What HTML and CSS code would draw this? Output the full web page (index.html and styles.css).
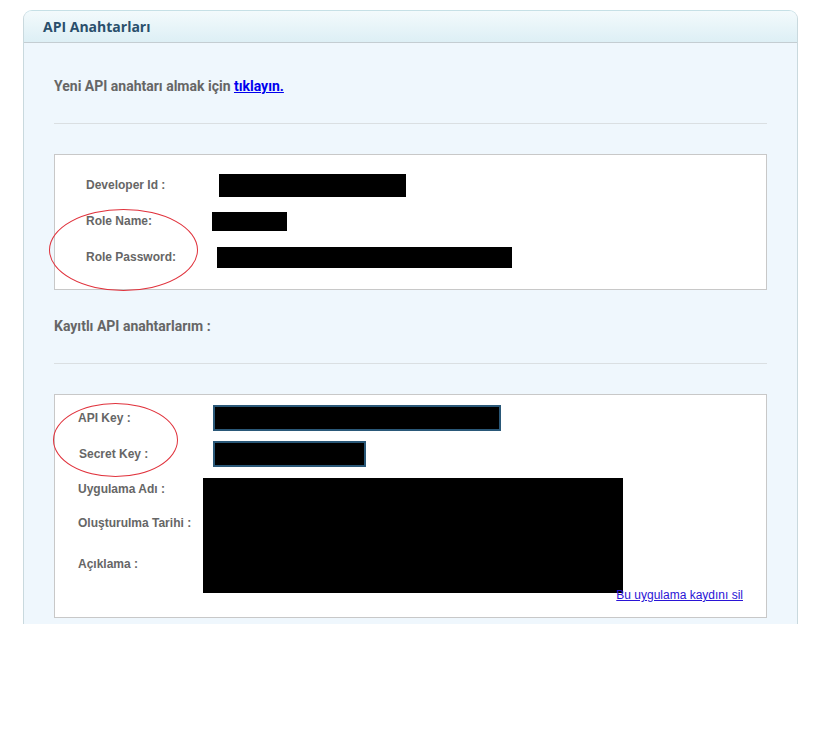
FILE: index.html
```html
<!DOCTYPE html>
<html lang="tr">
<head>
<meta charset="utf-8">
<title>API Anahtarları</title>
<link rel="stylesheet" href="styles.css">
</head>
<body>
<div class="panel">
  <div class="panel-head"><h2 class="panel-title">API Anahtarları</h2></div>
  <div class="panel-body">
    <p class="intro">Yeni API anahtarı almak için <a href="#" class="intro-link">tıklayın.</a></p>
    <hr class="sep">
    <div class="box box-dev">
      <div class="row"><span class="lbl lbl-dev">Developer Id :</span><span class="redact r-devid"></span></div>
      <div class="row"><span class="lbl lbl-dev">Role Name:</span><span class="redact r-role"></span></div>
      <div class="row"><span class="lbl lbl-dev">Role Password:</span><span class="redact r-pass"></span></div>
      <span class="circle circle-role"></span>
    </div>
    <p class="intro intro-keys">Kayıtlı API anahtarlarım :</p>
    <hr class="sep">
    <div class="box box-keys">
      <div class="row"><span class="lbl lbl-key">API Key :</span><span class="redact field r-api"></span></div>
      <div class="row"><span class="lbl lbl-key lbl-secret">Secret Key :</span><span class="redact field r-secret"></span></div>
      <div class="app">
        <div class="app-labels">
          <span class="lbl lbl-app1">Uygulama Adı :</span>
          <span class="lbl lbl-app2">Oluşturulma Tarihi :</span>
          <span class="lbl lbl-app3">Açıklama :</span>
        </div>
        <span class="redact r-app"></span>
      </div>
      <div class="del-line"><a href="#" class="del-link">Bu uygulama kaydını sil</a></div>
      <span class="circle circle-keys"></span>
    </div>
  </div>
</div>
</body>
</html>
```
FILE: styles.css
```css
html, body { margin: 0; padding: 0; background: #fff; }
body { padding: 10px 0 0 23px; width: 775px; font-family: "Liberation Sans", Arial, sans-serif; }

.panel {
  border: 1px solid #c9d9de;
  border-top-color: #c6e0e6;
  border-bottom: none;
  border-radius: 9px 9px 0 0;
  background: #eff7fd;
}
.panel-head {
  height: 31px;
  border-bottom: 1px solid #c4cdd2;
  border-radius: 8px 8px 0 0;
  background: linear-gradient(#f3fafc, #ddeff5);
  display: flex;
  align-items: center;
  padding-left: 19px;
}
.panel-title {
  margin: 0;
  font-family: "Open Sans", "DejaVu Sans", sans-serif;
  font-weight: 700;
  font-size: 14px;
  color: #2a4f6c;
  letter-spacing: 0;
}
.panel-body { padding: 0 30px 6px 30px; }

.intro {
  margin: 34px 0 0 0;
  line-height: 18px;
  font-family: Roboto, "Liberation Sans", sans-serif;
  font-weight: 700;
  font-size: 14px;
  color: #666;
}
.intro-link { color: #0000ee; text-decoration: underline; }
.intro-keys { margin-top: 27px; }

.sep {
  margin: 28px 0 0 0;
  border: none;
  border-top: 1px solid #dadfe2;
  height: 0;
}

.box {
  position: relative;
  margin-top: 30px;
  background: #fff;
  border: 1px solid #c8c8c8;
}
.box-dev { padding: 12px 0 14px 31px; }
.box-keys { padding: 5px 23px 15px 23px; }

.row { display: flex; align-items: center; height: 36px; }
.lbl {
  font-weight: 700;
  font-size: 12px;
  line-height: 14px;
  color: #666;
}
.lbl-dev { width: 120px; flex: none; }
.lbl-key { width: 135px; flex: none; }
.lbl-secret { padding-left: 1px; width: 134px; }

.redact { display: block; background: #000; flex: none; }
.r-devid { width: 187px; height: 23px; margin-left: 13px; }
.r-role { width: 75px; height: 19px; margin-left: 6px; }
.r-pass { width: 295px; height: 21px; margin-left: 11px; }

.field { border: 2px solid #2a5878; box-sizing: border-box; height: 26px; }
.r-api { width: 288px; }
.r-secret { width: 153px; }

.app { display: flex; margin-top: 6px; }
.app-labels { width: 125px; display: flex; flex-direction: column; padding-top: 4px; }
.lbl-app2 { margin-top: 20px; }
.lbl-app3 { margin-top: 27px; }
.r-app { width: 420px; height: 115px; }

.del-line { margin-top: -5px; text-align: right; line-height: 14px; font-size: 12px; }
.del-link { color: #2a14d6; text-decoration: underline; }

.circle {
  position: absolute;
  border: 1px solid #e0323c;
  border-radius: 50%;
}
.circle-role { left: -6px; top: 54px; width: 147px; height: 80px; }
.circle-keys { left: -2px; top: 8px; width: 123px; height: 72px; }
```
